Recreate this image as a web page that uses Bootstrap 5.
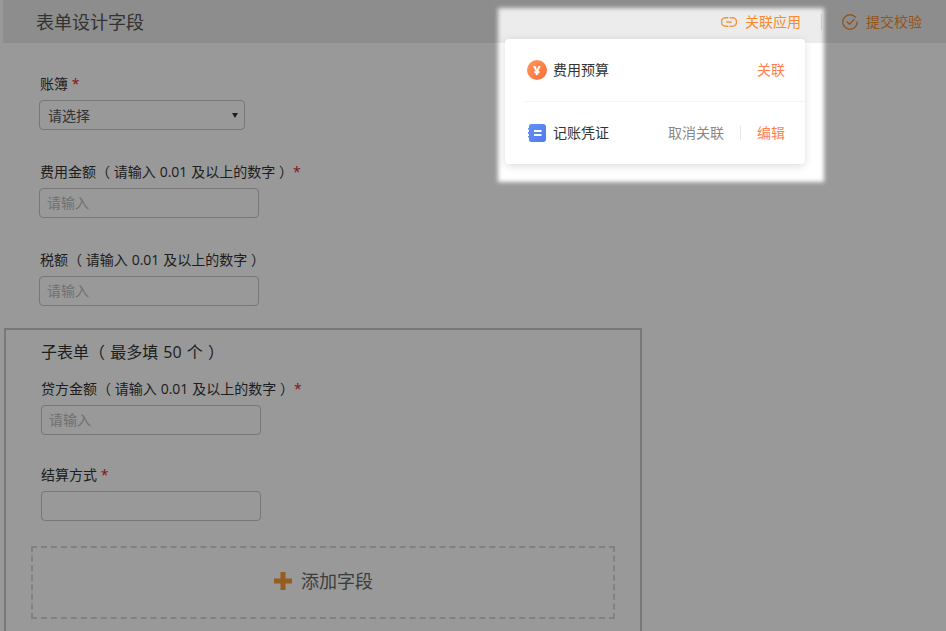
<!DOCTYPE html>
<html lang="zh">
<head>
<meta charset="utf-8">
<title>表单设计字段</title>
<link href="https://cdn.jsdelivr.net/npm/bootstrap@5.3.0/dist/css/bootstrap.min.css" rel="stylesheet">
<style>
html,body{height:631px;overflow:hidden;background:#fff}
body{font-family:"Open Sans","Noto Sans CJK SC",sans-serif;font-size:14px;color:#333;line-height:20px;position:relative}
.top-bar{margin-left:3px;height:43px;background:#ececec;padding-left:33px;padding-right:24px}
.top-title{font-size:18px;color:#555}
.top-link{color:#f78a2e;gap:8px}
.top-sep{width:1px;height:16px;background:#d5d5d5;margin:0 20px}
.form-area{padding:31px 0 0 4px}
.fld{margin-bottom:32px;width:300px}
.fld-top{padding-left:36px}
.fld-lab{display:block;margin-bottom:6px;white-space:nowrap;word-spacing:.2px}
.req{color:#e02020}
.fld-input.form-control,.fld-input.form-select{width:220px;height:30px;padding:0 7px 2px;font-size:14px;line-height:26px;border:1px solid #c6c6c6;border-radius:4px;color:#555;background-color:transparent;box-shadow:none}
.fld-input.form-control::placeholder{color:#bbb}
.fld-top .fld-input.form-control,.fld-top .fld-input.form-select{margin-left:-1px}
.fld-input.form-select{width:206px;padding:1px 8px 0;line-height:28px;appearance:none;background-image:url("data:image/svg+xml,%3Csvg xmlns='http://www.w3.org/2000/svg' viewBox='0 0 6 5'%3E%3Cpath fill='%23333' d='M0 0h6L3 5z'/%3E%3C/svg%3E");background-repeat:no-repeat;background-position:right 6px center;background-size:6px 5px}
.sub-box{width:638px;border:2px solid #c8c8c8;margin-top:-10px;padding:11px 25px 0 25px;height:310px}
.sub-title{font-size:16px;line-height:22px;margin:0 0 16px 10px;color:#333;word-spacing:1px}
.sub-fld{margin-left:10px;margin-bottom:30px;width:300px}
.add-zone{height:73px;margin-top:-5px;padding-bottom:4px;border:2px dashed #d8d8d8;font-size:18px;color:#666;gap:8px}
.plus-ico{color:#f89b35}
.spot{position:absolute;left:498px;top:8px;width:326px;height:174px;box-shadow:0 0 0 2000px rgba(0,0,0,.4);filter:blur(2px);z-index:10;pointer-events:none}
.pop-card{position:absolute;left:505px;top:39px;width:300px;height:125px;background:#fff;border-radius:4px;box-shadow:0 2px 8px rgba(0,0,0,.14);z-index:11;padding-left:20px}
.pop-row{height:62px;padding-right:20px}
.pop-row+.pop-row{height:63px;border-top:1px solid #f4f4f4}
.pop-name{margin-left:6px;color:#333}
.yen-ico{width:20px;height:20px;border-radius:50%;margin-left:2px;background:linear-gradient(135deg,#ff9a5a,#fb6a3a);color:#fff;font-size:13px;font-weight:700;line-height:20px;text-align:center}
.doc-ico{margin-left:3px;margin-right:1px}
.act-hot{color:#ff7f50}
.act-mute{color:#888}
.act-sep{width:1px;height:14px;background:#e8e8e8;margin:0 16px}
</style>
</head>
<body>
<div class="top-bar d-flex align-items-center justify-content-between">
  <div class="top-title">表单设计字段</div>
  <div class="d-flex align-items-center">
    <div class="top-link d-flex align-items-center">
      <svg width="16" height="16" viewBox="0 0 16 16" fill="none" stroke="#f7963f" stroke-width="1.6" stroke-linecap="round"><path d="M6.800 3.800H4.600a4.200 4.200 0 0 0 0 8.400h2.200M9.200 3.800h2.200a4.200 4.200 0 0 1 0 8.400H9.200M5.800 8h4.400"/></svg>
      <span>关联应用</span>
    </div>
    <div class="top-sep"></div>
    <div class="top-link d-flex align-items-center">
      <svg width="16" height="16" viewBox="0 0 16 16" fill="none" stroke="#f78a2e" stroke-width="1.3" stroke-linecap="round" stroke-linejoin="round"><path d="M13.400 3.200A7.200 7.200 0 1 0 15.200 8"/><path d="M5 7.800l2.500 2.400 4.500-4.700"/></svg>
      <span>提交校验</span>
    </div>
  </div>
</div>

<div class="form-area">
  <div class="fld fld-top">
    <label class="fld-lab">账簿 <span class="req">*</span></label>
    <select class="form-select fld-input"><option>请选择</option></select>
  </div>
  <div class="fld fld-top">
    <label class="fld-lab">费用金额（ 请输入 0.01 及以上的数字 ）<span class="req">*</span></label>
    <input class="form-control fld-input" placeholder="请输入">
  </div>
  <div class="fld fld-top">
    <label class="fld-lab">税额（ 请输入 0.01 及以上的数字 ）</label>
    <input class="form-control fld-input" placeholder="请输入">
  </div>
  <div class="sub-box">
    <div class="sub-title">子表单（ 最多填 50 个 ）</div>
    <div class="sub-fld">
      <label class="fld-lab">贷方金额（ 请输入 0.01 及以上的数字 ）<span class="req">*</span></label>
      <input class="form-control fld-input" placeholder="请输入">
    </div>
    <div class="sub-fld">
      <label class="fld-lab">结算方式 <span class="req">*</span></label>
      <input class="form-control fld-input">
    </div>
    <div class="add-zone d-flex align-items-center justify-content-center">
      <svg class="plus-ico" width="20" height="20" viewBox="0 0 20 20"><path fill="currentColor" d="M7.500 1h5v6.500H19v5h-6.500V19h-5v-6.500H1v-5h6.500z"/></svg>
      <span>添加字段</span>
    </div>
  </div>
</div>

<div class="spot"></div>
<div class="pop-card">
  <div class="pop-row d-flex align-items-center justify-content-between">
    <div class="d-flex align-items-center">
      <div class="yen-ico">¥</div>
      <span class="pop-name">费用预算</span>
    </div>
    <span class="act-hot">关联</span>
  </div>
  <div class="pop-row d-flex align-items-center justify-content-between">
    <div class="d-flex align-items-center">
      <svg class="doc-ico" width="18" height="18" viewBox="0 0 18 18"><defs><linearGradient id="dg" x1="0" y1="0" x2="1" y2="1"><stop offset="0" stop-color="#6393f2"/><stop offset="1" stop-color="#5078f0"/></linearGradient></defs><path fill="url(#dg)" d="M3 0h12a3 3 0 0 1 3 3v12a3 3 0 0 1-3 3H3a2 2 0 0 1-2-2v-2.500H0v-1.500h1V10H0V8h1V5.500H0V4h1V2a2 2 0 0 1 2-2z"/><path fill="#fff" d="M6 6h7.500v2H6zM6 10h7.500v2H6z"/></svg>
      <span class="pop-name">记账凭证</span>
    </div>
    <div class="d-flex align-items-center">
      <span class="act-mute">取消关联</span>
      <span class="act-sep"></span>
      <span class="act-hot">编辑</span>
    </div>
  </div>
</div>
<script src="https://cdn.jsdelivr.net/npm/bootstrap@5.3.0/dist/js/bootstrap.bundle.min.js"></script>
</body>
</html>
